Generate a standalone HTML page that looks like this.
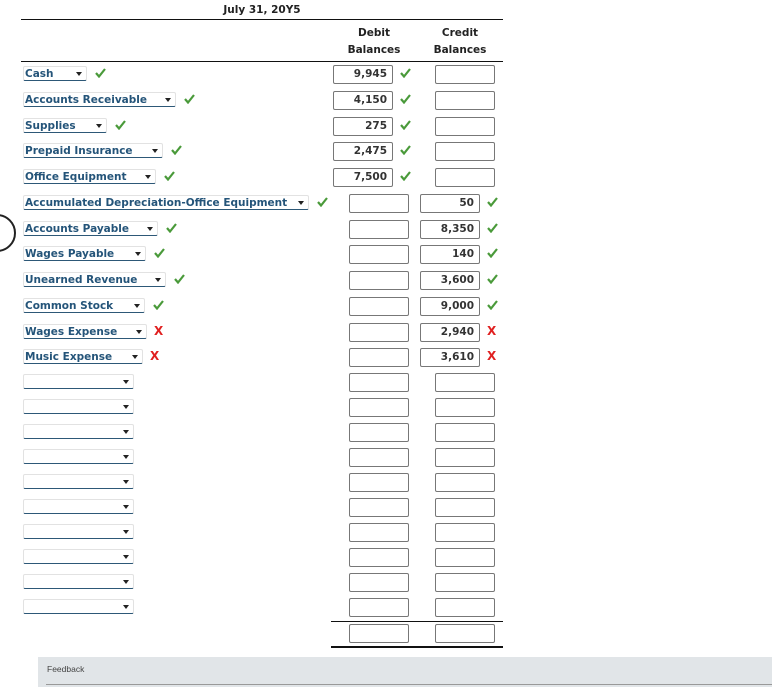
<!DOCTYPE html>
<html><head><meta charset="utf-8"><style>
body{margin:0;width:772px;height:687px;background:#fff;position:relative;overflow:hidden;font-family:"DejaVu Sans","Liberation Sans",sans-serif;}
.a{position:absolute}
.t{font-size:10.5px;font-weight:bold;color:#222;text-align:center}
.sel{position:absolute;left:23px;height:15px;box-sizing:border-box;border:1px solid #e2e2e2;border-bottom:1.5px solid #2d5877;border-radius:2px;font-size:10.5px;font-weight:bold;color:#245479;line-height:15px;padding-left:1px;white-space:nowrap;overflow:hidden}
.sel:after{content:"";position:absolute;right:4px;top:5px;border-left:3px solid transparent;border-right:3px solid transparent;border-top:4px solid #222}
.box{position:absolute;width:58px;height:17px;border:1px solid #777;border-radius:2px;font-size:10.5px;font-weight:bold;color:#333;text-align:right;line-height:17px;box-sizing:content-box}
.box span{padding-right:5px}
.ck{position:absolute;width:11px;height:10px}
.x{position:absolute;color:#e02020;font-size:12px;font-weight:bold}
</style></head><body>
<div class="a t" style="left:200px;top:4px;width:124px">July 31, 20Y5</div>
<div class="a" style="left:21px;top:19px;width:482px;height:1px;background:#111"></div>
<div class="a t" style="left:334px;top:25px;width:80px;line-height:17px">Debit<br>Balances</div>
<div class="a t" style="left:420px;top:25px;width:80px;line-height:17px">Credit<br>Balances</div>
<div class="a" style="left:21px;top:61px;width:482px;height:1px;background:#111"></div>
<div class="a" style="left:-22px;top:214px;width:34px;height:34px;border:2px solid #222;border-radius:50%"></div>
<div id="r"></div>
<div class="a" style="left:331px;top:621px;width:172px;height:1px;background:#111"></div>
<div class="box" style="left:349px;top:624px"></div>
<div class="box" style="left:435px;top:624px"></div>
<div class="a" style="left:331px;top:646px;width:172px;height:2px;background:#111"></div>
<div class="a" style="left:38px;top:657px;width:734px;height:30px;background:#e1e5e8"></div>
<div class="a" style="left:46px;top:684px;width:726px;height:1px;background:#999"></div>
<div class="a" style="left:47px;top:664px;font-size:8.5px;color:#444;font-family:'Liberation Sans',sans-serif">Feedback</div>
<script>
function ck(x,y){return '<svg class="ck" style="left:'+x+'px;top:'+y+'px" viewBox="0 0 11 10"><polyline points="1,5 4,8.5 10,1" fill="none" stroke="#4a9a3a" stroke-width="2.2"/></svg>';}
var rows=[
["Cash",64,"9,945","",1,0],["Accounts Receivable",153,"4,150","",1,0],["Supplies",84,"275","",1,0],
["Prepaid Insurance",140,"2,475","",1,0],["Office Equipment",133,"7,500","",1,0],
["Accumulated Depreciation-Office Equipment",286,"","50",2,0],["Accounts Payable",135,"","8,350",2,0],
["Wages Payable",123,"","140",2,0],["Unearned Revenue",143,"","3,600",2,0],["Common Stock",122,"","9,000",2,0],
["Wages Expense",124,"","2,940",2,1],["Music Expense",120,"","3,610",2,1]];
var ys=[74,100,126,151,177,203,229,254,280,306,332,357];
var h="";
for(var i=0;i<rows.length;i++){var r=rows[i],y=ys[i];
h+='<div class="sel" style="top:'+(y-8)+'px;width:'+r[1]+'px">'+r[0]+'</div>';
h+=r[5]?'<div class="x" style="left:'+(r[1]+30)+'px;top:'+(y-8)+'px">X</div>':ck(r[1]+31,y-6);
if(r[4]==1){h+='<div class="box" style="left:333px;top:'+(y-9)+'px"><span>'+r[2]+'</span></div>'+ck(400,y-6)+'<div class="box" style="left:435px;top:'+(y-9)+'px"></div>';}
else{h+='<div class="box" style="left:349px;top:'+(y-9)+'px"></div><div class="box" style="left:420px;top:'+(y-9)+'px"><span>'+r[3]+'</span></div>';
h+=r[5]?'<div class="x" style="left:487px;top:'+(y-8)+'px">X</div>':ck(487,y-6);}}
for(var j=0;j<10;j++){var y=382+j*25;
h+='<div class="sel" style="top:'+(y-8)+'px;width:111px"></div><div class="box" style="left:349px;top:'+(y-9)+'px"></div><div class="box" style="left:435px;top:'+(y-9)+'px"></div>';}
document.getElementById("r").innerHTML=h;
</script>
</body></html>
